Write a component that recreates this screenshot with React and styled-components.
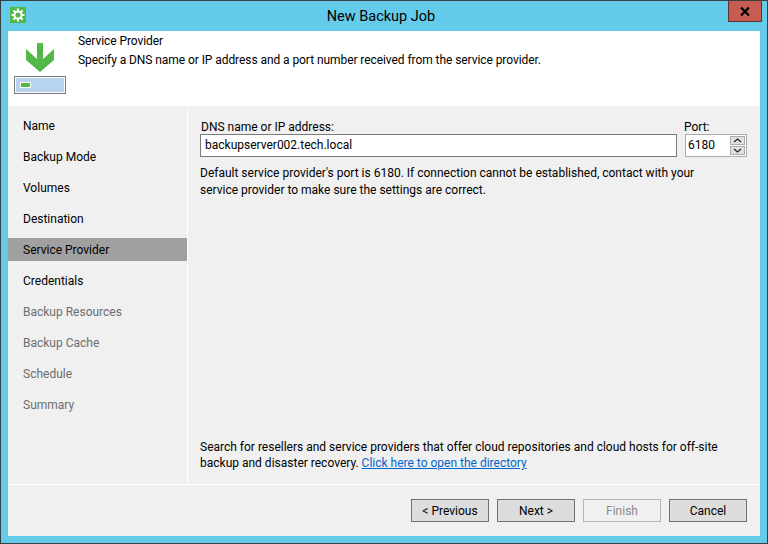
import React from 'react';
import styled, { createGlobalStyle } from 'styled-components';

const GlobalStyle = createGlobalStyle`
  html, body {
    margin: 0;
    padding: 0;
    background: #65cbeb;
  }
  body {
    font-family: Roboto, "Noto Sans", sans-serif;
    font-size: 12px;
    color: #000;
  }
`;

const Window = styled.div`
  box-sizing: border-box;
  width: 768px;
  height: 544px;
  display: flex;
  flex-direction: column;
  background: #65cbeb;
  border: 1px solid #3a3f44;
`;

const TitleBar = styled.div`
  position: relative;
  box-sizing: border-box;
  height: 30px;
  flex-shrink: 0;
  display: flex;
  align-items: center;
  justify-content: center;
  padding-right: 6px;
  font-size: 14.5px;
`;

const AppIcon = styled.div`
  position: absolute;
  left: 9px;
  top: 6px;
  width: 16px;
  height: 16px;
  background: #52b848;
  display: flex;
  align-items: center;
  justify-content: center;
`;

const CloseButton = styled.div`
  position: absolute;
  right: 5px;
  top: 0;
  box-sizing: border-box;
  width: 34px;
  height: 21px;
  background: #c75c52;
  border: 1px solid #5a3530;
  border-top: none;
  display: flex;
  align-items: center;
  justify-content: center;
`;

const Client = styled.div`
  flex: 1;
  margin: 0 7px 7px;
  display: flex;
  flex-direction: column;
  background: #f0f0f0;
  min-height: 0;
`;

const Header = styled.div`
  height: 75px;
  flex-shrink: 0;
  background: #fff;
  display: flex;
`;

const HeaderArt = styled.div`
  width: 70px;
  padding: 12px 0 0 6px;
  box-sizing: border-box;
`;

const HeaderText = styled.div`
  padding-top: 2px;
  line-height: 17px;
  letter-spacing: -0.07px;
`;

const HeaderLine = styled.div`
  margin-bottom: ${p => p.$gap || 0}px;
`;

const Middle = styled.div`
  flex: 1;
  display: flex;
  min-height: 0;
`;

const Nav = styled.div`
  width: 179px;
  flex-shrink: 0;
  padding-top: 8px;
  border-right: 1px solid #fff;
`;

const NavItem = styled.div`
  height: 23px;
  margin-bottom: 8px;
  padding-left: 15px;
  line-height: 25px;
  background: ${p => (p.$active ? '#a0a0a0' : 'transparent')};
  color: ${p => (p.$muted ? '#6d6d6d' : '#000')};
`;

const Content = styled.div`
  flex: 1;
  display: flex;
  flex-direction: column;
  padding: 14px 13px 13px 12px;
  min-width: 0;
`;

const FieldRow = styled.div`
  display: flex;
  gap: 8px;
`;

const Field = styled.div`
  display: flex;
  flex-direction: column;
  flex: ${p => (p.$grow ? 1 : 'none')};
  width: ${p => (p.$width ? `${p.$width}px` : 'auto')};
`;

const Label = styled.div`
  line-height: 14px;
  height: 14px;
  margin-left: ${p => p.$shift ?? 1}px;
`;

const TextBox = styled.div`
  box-sizing: border-box;
  height: 23px;
  background: #fff;
  border: 1px solid #7a7a7a;
  padding-left: 4px;
  line-height: 20px;
`;

const SpinBox = styled.div`
  box-sizing: border-box;
  height: 23px;
  background: #fff;
  border: 1px solid #ababab;
  display: flex;
  padding-left: 2px;
  line-height: 20px;
`;

const SpinValue = styled.div`
  flex: 1;
`;

const SpinButtons = styled.div`
  width: 15px;
  margin-right: 1px;
  display: flex;
  flex-direction: column;
  justify-content: center;
  gap: 1px;
`;

const SpinButton = styled.div`
  height: 7px;
  background: #e1e1e1;
  border: 1px solid #ababab;
  display: flex;
  align-items: center;
  justify-content: center;
`;

const Note = styled.div`
  margin-top: 8px;
  line-height: ${p => (p.$tight ? 16 : 17)}px;
`;

const Spacer = styled.div`
  flex: 1;
`;

const Link = styled.a`
  color: #0066cc;
  text-decoration: underline;
`;

const Footer = styled.div`
  box-sizing: border-box;
  height: 52px;
  flex-shrink: 0;
  border-top: 1px solid #fff;
  display: flex;
  justify-content: flex-end;
  align-items: flex-start;
  gap: 8px;
  padding: 14px 13px 0 0;
`;

const Button = styled.div`
  box-sizing: border-box;
  width: 78px;
  height: 23px;
  display: flex;
  align-items: center;
  justify-content: center;
  background: ${p => (p.$disabled ? '#f0f0f0' : '#dddddd')};
  border: 1px solid ${p => (p.$disabled ? '#b5b5b5' : '#707070')};
  color: ${p => (p.$disabled ? '#8a8a8a' : '#000')};
`;

function GearIcon() {
  return (
    <svg width="14" height="14" viewBox="0 0 14 14">
      <g stroke="#fff" strokeWidth="2">
        <line x1="7" y1="0.5" x2="7" y2="13.5" />
        <line x1="0.5" y1="7" x2="13.5" y2="7" />
        <line x1="2.4" y1="2.4" x2="11.6" y2="11.6" />
        <line x1="11.6" y1="2.4" x2="2.4" y2="11.6" />
      </g>
      <circle cx="7" cy="7" r="3.6" fill="#52b848" stroke="#fff" strokeWidth="2" />
    </svg>
  );
}

function JobArt() {
  return (
    <svg width="52" height="52" viewBox="0 0 52 52">
      <path d="M23 0h6v16l11-10v11L26 29 12 17V6l11 10z" fill="#52b848" />
      <rect x="0.5" y="33.5" width="51" height="17" fill="#b8d3ed" stroke="#7a7a7a" />
      <rect x="1.5" y="34.5" width="49" height="15" fill="none" stroke="#fff" />
      <rect x="6.5" y="39.5" width="10" height="5" fill="#52b848" stroke="#fff" />
    </svg>
  );
}

function Chevron({ up }) {
  return (
    <svg width="9" height="5" viewBox="0 0 9 5">
      <path d={up ? 'M1 4l3.5-3L8 4' : 'M1 1l3.5 3L8 1'} fill="none" stroke="#222" strokeWidth="1.3" />
    </svg>
  );
}

const steps = [
  { name: 'Name' },
  { name: 'Backup Mode' },
  { name: 'Volumes' },
  { name: 'Destination' },
  { name: 'Service Provider', active: true },
  { name: 'Credentials' },
  { name: 'Backup Resources', muted: true },
  { name: 'Backup Cache', muted: true },
  { name: 'Schedule', muted: true },
  { name: 'Summary', muted: true },
];

export default function App() {
  return (
    <Window>
      <GlobalStyle />
      <TitleBar>
        <AppIcon><GearIcon /></AppIcon>
        New Backup Job
        <CloseButton>
          <svg width="10" height="9" viewBox="0 0 10 9">
            <path d="M1 0.5l8 8M9 0.5l-8 8" stroke="#000" strokeWidth="2.2" />
          </svg>
        </CloseButton>
      </TitleBar>
      <Client>
        <Header>
          <HeaderArt><JobArt /></HeaderArt>
          <HeaderText>
            <HeaderLine $gap={2}>Service Provider</HeaderLine>
            <HeaderLine>Specify a DNS name or IP address and a port number received from the service provider.</HeaderLine>
          </HeaderText>
        </Header>
        <Middle>
          <Nav>
            {steps.map(s => (
              <NavItem key={s.name} $active={s.active} $muted={s.muted}>{s.name}</NavItem>
            ))}
          </Nav>
          <Content>
            <FieldRow>
              <Field $grow>
                <Label>DNS name or IP address:</Label>
                <TextBox>backupserver002.tech.local</TextBox>
              </Field>
              <Field $width={62}>
                <Label $shift={-1}>Port:</Label>
                <SpinBox>
                  <SpinValue>6180</SpinValue>
                  <SpinButtons>
                    <SpinButton><Chevron up /></SpinButton>
                    <SpinButton><Chevron /></SpinButton>
                  </SpinButtons>
                </SpinBox>
              </Field>
            </FieldRow>
            <Note>
              Default service provider's port is 6180. If connection cannot be established, contact with your<br />
              service provider to make sure the settings are correct.
            </Note>
            <Spacer />
            <Note $tight>
              Search for resellers and service providers that offer cloud repositories and cloud hosts for off-site<br />
              backup and disaster recovery. <Link href="#">Click here to open the directory</Link>
            </Note>
          </Content>
        </Middle>
        <Footer>
          <Button>&lt; Previous</Button>
          <Button>Next &gt;</Button>
          <Button $disabled>Finish</Button>
          <Button>Cancel</Button>
        </Footer>
      </Client>
    </Window>
  );
}
